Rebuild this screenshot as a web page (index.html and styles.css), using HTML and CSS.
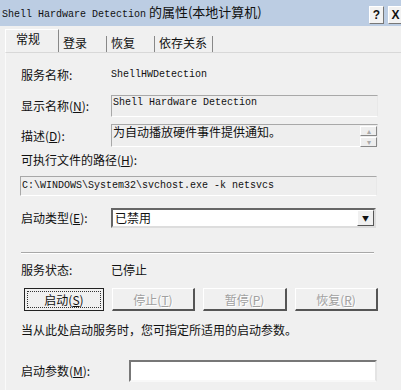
FILE: index.html
```html
<html lang="zh-CN">
<head>
    <meta charset="UTF-8">
    <title>Shell Hardware Detection 的属性</title>
    <link rel="stylesheet" href="styles.css">
</head>
<body>

    <div class="window">
        <div class="titlebar">
            <span class="title"><span class="mono">Shell Hardware Detection</span> 的属性(本地计算机)</span>
            <span class="tb-buttons">
                <span class="tb-btn">?</span>
                <span class="tb-btn">X</span>
            </span>
        </div>

        <div class="tabs">
            <div class="tab active">常规</div>
            <div class="tab t2">登录</div>
            <div class="tab t3">恢复</div>
            <div class="tab t4">依存关系</div>
        </div>

        <div class="panel">
            <div class="row r1">
                <span class="label">服务名称:</span>
                <span class="mono value">ShellHWDetection</span>
            </div>

            <div class="row r2">
                <span class="label">显示名称(<u>N</u>):</span>
                <div class="field name-box"><span class="mono">Shell Hardware Detection</span></div>
            </div>

            <div class="row r3">
                <span class="label">描述(<u>D</u>):</span>
                <div class="field desc-box">
                    <span>为自动播放硬件事件提供通知。</span>
                    <div class="spin">
                        <span class="spin-btn">▴</span>
                        <span class="spin-btn">▾</span>
                    </div>
                </div>
            </div>

            <div class="line r4">可执行文件的路径(<u>H</u>):</div>
            <div class="field path-box"><span class="mono">C:\WINDOWS\System32\svchost.exe -k netsvcs</span></div>

            <div class="row r5">
                <span class="label">启动类型(<u>E</u>):</span>
                <div class="combo">
                    <span class="combo-text">已禁用</span>
                    <span class="combo-btn">▼</span>
                </div>
            </div>

            <div class="sep"></div>

            <div class="row r6">
                <span class="label">服务状态:</span>
                <span class="value">已停止</span>
            </div>

            <div class="buttons">
                <button class="btn focus"><span>启动(<u>S</u>)</span></button>
                <button class="btn off b2" disabled>停止(<u>T</u>)</button>
                <button class="btn off b3" disabled>暂停(<u>P</u>)</button>
                <button class="btn off b4" disabled>恢复(<u>R</u>)</button>
            </div>

            <div class="line note">当从此处启动服务时，您可指定所适用的启动参数。</div>

            <div class="row r7">
                <span class="label wide">启动参数(<u>M</u>):</span>
                <div class="input"></div>
            </div>
        </div>
    </div>

</body>
</html>
```

FILE: styles.css
```css
        body {
            margin: 0;
            font-family: "Noto Sans CJK SC", "Liberation Sans", sans-serif;
            font-size: 12px;
            color: #111;
            background-color: #f0f0f0;
        }
        .window {
            width: 401px;
            height: 390px;
            overflow: hidden;
            background-color: #f0f0f0;
        }
        .mono {
            font-family: "Liberation Mono", monospace;
            font-size: 10px;
        }
        u {
            text-decoration: underline;
        }

        /* title bar */
        .titlebar {
            height: 26px;
            display: flex;
            align-items: center;
            justify-content: space-between;
            background-color: #bccde3;
            padding-left: 2px;
            line-height: 14px;
        }
        .title {
            font-size: 13px;
        }
        .tb-buttons {
            display: flex;
            gap: 4px;
            margin-right: -2px;
            margin-top: 4px;
        }
        .tb-btn {
            width: 13px;
            height: 16px;
            display: flex;
            align-items: center;
            justify-content: center;
            background-color: #f2f2f2;
            border: 1px solid #fff;
            border-right-color: #777;
            border-bottom-color: #777;
            font-family: "Liberation Sans", sans-serif;
            font-weight: bold;
            font-size: 12px;
        }

        /* tabs */
        .tabs {
            height: 26px;
            display: flex;
            align-items: flex-end;
            padding-left: 5px;
        }
        .tab {
            height: 14px;
            line-height: 14px;
            padding: 0 0 2px 3px;
            border-right: 1px solid #888;
            box-sizing: content-box;
        }
        .tab.active {
            width: 42px;
            height: 20px;
            padding: 0 0 2px 10px;
            line-height: 18px;
            border-left: 1px solid #fff;
            border-top: 1px solid #fff;
            background-color: #f0f0f0;
        }
        .t2 { width: 43px; margin-left: 1px; }
        .t3 { width: 43px; padding-left: 4px; }
        .t4 { width: 53px; padding-left: 4px; }

        /* page */
        .panel {
            margin-left: 5px;
            width: 373px;
            height: 338px;
            border-top: 1px solid #d8d8d8;
            border-left: 1px solid #fafafa;
            border-right: 1px solid #999;
            padding: 15px 16px 0 15px;
        }
        .row {
            display: flex;
            align-items: center;
        }
        .label {
            width: 90px;
            flex: none;
            line-height: 14px;
        }
        .label.wide {
            width: 108px;
        }
        .value {
            line-height: 14px;
        }
        .r1 { height: 14px; }
        .r2 { margin-top: 13px; }
        .r3 { margin-top: 7px; }
        .r4 { margin-top: 6px; }
        .r5 { margin-top: 12px; }
        .r6 { margin-top: 9px; height: 14px; }
        .r7 { margin-top: 23px; }
        .line {
            line-height: 14px;
        }

        .field {
            box-sizing: border-box;
            border: 1px solid #a8a8a8;
            border-right-color: #e8e8e8;
            border-bottom-color: #fff;
            background-color: #eeeeee;
            padding: 1px 0 0 1px;
            line-height: 12px;
        }
        .name-box {
            width: 267px;
            height: 22px;
        }
        .desc-box {
            width: 267px;
            height: 23px;
            display: flex;
            justify-content: space-between;
            line-height: 14px;
            padding-top: 0;
        }
        .spin {
            display: flex;
            flex-direction: column;
            gap: 1px;
            margin-top: 1px;
        }
        .spin-btn {
            width: 15px;
            height: 8px;
            border: 1px solid #fff;
            border-right-color: #888;
            border-bottom-color: #888;
            font-size: 8px;
            line-height: 8px;
            text-align: center;
            color: #aaa;
        }
        .path-box {
            margin-top: 9px;
            width: 357px;
            height: 20px;
            padding: 3px 0 0 1px;
            margin-left: -1px;
        }

        .combo {
            box-sizing: border-box;
            width: 265px;
            height: 20px;
            display: flex;
            align-items: center;
            justify-content: space-between;
            background-color: #fff;
            border: 2px solid #666;
            border-right-color: #ddd;
            border-bottom-color: #ddd;
        }
        .combo-text {
            padding-left: 2px;
            line-height: 14px;
        }
        .combo-btn {
            box-sizing: border-box;
            width: 17px;
            height: 16px;
            background-color: #f0f0f0;
            border: 1px solid #fff;
            border-right-color: #555;
            border-bottom-color: #555;
            font-size: 7px;
            line-height: 14px;
            text-align: center;
        }

        .sep {
            margin-top: 24px;
            width: 353px;
            border-top: 1px solid #a8a8a8;
            border-bottom: 1px solid #fff;
        }

        .buttons {
            display: flex;
            gap: 8px;
            margin-top: 11px;
            padding-left: 3px;
        }
        .btn {
            box-sizing: border-box;
            height: 23px;
            width: 83px;
            padding: 0;
            font-family: inherit;
            font-size: 12px;
            color: #111;
            background-color: #f0f0f0;
            border: 1px solid #fff;
            border-right: 2px solid #555;
            border-bottom: 2px solid #555;
        }
        .btn.focus {
            width: 80px;
            border: 1px solid #222;
            padding: 2px;
        }
        .btn.focus span {
            display: block;
            height: 15px;
            line-height: 15px;
            border: 1px dotted #333;
        }
        .btn.off {
            color: #a0a0a0;
            text-shadow: 1px 1px 0 #fff;
        }
        .b3 { width: 84px; }

        .note {
            margin-top: 12px;
        }

        .input {
            box-sizing: border-box;
            width: 248px;
            height: 22px;
            background-color: #fff;
            border: 2px solid #777;
            border-right-color: #e4e4e4;
            border-bottom-color: #f8f8f8;
        }
```
